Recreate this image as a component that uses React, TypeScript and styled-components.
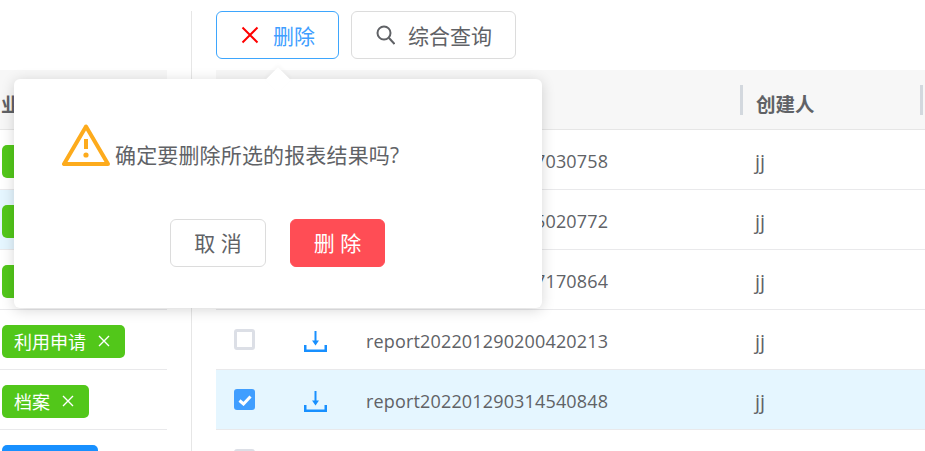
import React from "react";
import styled, { createGlobalStyle } from "styled-components";

const Global = createGlobalStyle`
  html, body { margin: 0; padding: 0; background: #fff; overflow: hidden; }
  * { box-sizing: border-box; }
  body { font-family: "Open Sans", "Noto Sans CJK SC", sans-serif; color: #606266; }
`;
const Page = styled.div`
  position: relative; width: 925px; height: 451px; overflow: hidden; display: flex; padding-top: 11px;
`;
const Side = styled.aside`
  width: 192px; flex: none; border-right: 1px solid #e6e6e6; padding-top: 59px; height: 500px;
`;
const SideTable = styled.div`width: 167px;`;
const SideHead = styled.div`
  height: 60px; background: #f7f7f7; border-bottom: 1px solid #e6e6e6; font-size: 19px; font-weight: 700; line-height: 70px; color: #606266; overflow: hidden; padding-left: 1px;
`;
const SideRow = styled.div<{ $on?: boolean }>`
  height: 60px; display: flex; align-items: center; padding: 3px 0 0 2px; border-bottom: 1px solid #e9e9eb;
  background: ${p => (p.$on ? "#e5f6ff" : "#fff")};
`;
const Tag = styled.span<{ $c: string; $min?: number }>`
  display: inline-flex; align-items: center; height: 33px; padding: 0 15px 1px 12px; border-radius: 5px; background: ${p => p.$c}; color: #fff; font-size: 18px; gap: 12px;
  min-width: ${p => p.$min ?? 0}px;
`;
const Main = styled.main`flex: 1; padding-left: 24px; min-width: 0;`;
const Toolbar = styled.div`display: flex; gap: 12px; height: 59px;`;
const ToolBtn = styled.button<{ $active?: boolean }>`
  height: 48px; padding: 0 23px 1px 24px; display: inline-flex; align-items: center; gap: ${p => (p.$active ? 14 : 13)}px; border-radius: 6px; background: #fff; font: inherit; font-size: 21px;
  border: 1px solid ${p => (p.$active ? "#3ea6fd" : "#dcdcdc")}; color: ${p => (p.$active ? "#409eff" : "#606266")};
`;
const Grid = styled.div`display: grid; grid-template-columns: 57px 85px 383px 180px 1fr;`;
const HeadCell = styled.div`
  height: 60px; background: #f7f7f7; border-bottom: 1px solid #e6e6e6; display: flex; align-items: center; padding: 8px 0 0 15px; font-size: 19.500px; font-weight: 700; position: relative;
`;
const HeadSep = styled.i`position: absolute; left: -1px; top: 15px; width: 3px; height: 30px; background: #d3d8de;`;
const Cell = styled.div<{ $on?: boolean; $center?: boolean }>`
  height: 60px; display: flex; align-items: center; border-bottom: 1px solid #e9e9eb; font-size: 18px; color: #606266;
  background: ${p => (p.$on ? "#e5f6ff" : "#fff")};
  justify-content: ${p => (p.$center ? "center" : "flex-start")};
`;
const Check = styled.span<{ $on?: boolean }>`
  width: 21px; height: 21px; border-radius: 3px; display: inline-flex; align-items: center; justify-content: center;
  ${p => (p.$on ? "background:#409eff;" : "border:3px solid #dcdfe6;background:#fff;")}
`;
const Name = styled.span`padding: 3px 0 0 8px; letter-spacing: 0.16px;`;
const User = styled.span`padding: 3px 0 0 14px; font-size: 20px;`;
const Pop = styled.div`
  position: absolute; left: 14px; top: 79px; width: 528px; height: 229px; background: #fff; border-radius: 6px; box-shadow: 0 2px 14px rgba(0,0,0,.16); padding: 45px 48px 0;
`;
const Arrow = styled.i`
  position: absolute; left: 255px; top: -8px; width: 18px; height: 18px; background: #fff; transform: rotate(45deg); box-shadow: -2px -2px 4px rgba(0,0,0,.03);
`;
const Msg = styled.div`display: flex; align-items: flex-end; gap: 5px; font-size: 21px; letter-spacing: 0.15px; color: #606266; height: 42px; line-height: 32px; white-space: nowrap;`;
const MsgText = styled.span`position: relative; top: 5px;`;
const Actions = styled.div`display: flex; gap: 24px; margin: 53px 0 0 108px;`;
const PopBtn = styled.button<{ $danger?: boolean }>`
  width: ${p => (p.$danger ? 95 : 96)}px; height: 48px; border-radius: 6px; font: inherit; font-size: 21px; padding: 0 0 2px;
  background: ${p => (p.$danger ? "#ff4d55" : "#fff")}; color: ${p => (p.$danger ? "#fff" : "#606266")};
  border: 1px solid ${p => (p.$danger ? "#ff4d55" : "#dcdcdc")};
`;
const DownloadSvg = styled.svg`margin-top: 4px; fill: #1890ff;`;

const X = ({ s = 12, c = "#fff", w = 1.4 }: { s?: number; c?: string; w?: number }) => (
  <svg width={s} height={s} viewBox="0 0 12 12"><path d="M1 1l10 10M11 1L1 11" stroke={c} strokeWidth={w} fill="none" /></svg>
);
const Search = () => (
  <svg width="19" height="20" viewBox="0 0 19 20" fill="none" stroke="#606266" strokeWidth="2"><circle cx="8" cy="8" r="6.500" /><path d="M12.800 12.800L18.500 19" /></svg>
);
const Download = () => (
  <DownloadSvg width="23" height="21" viewBox="0 0 23 21"><path d="M10.500 0h2v11h-2z" /><path d="M8 9.500h7l-3.500 5z" /><path d="M0 14h2.500v4.500h18V14H23v7H0z" /></DownloadSvg>
);
const Warn = () => (
  <svg width="48" height="42" viewBox="0 0 48 42" fill="none"><path d="M24 2.500L2 40h44z" stroke="#fdab1c" strokeWidth="4" strokeLinejoin="round" /><path d="M24 15v10" stroke="#fdab1c" strokeWidth="4" /><circle cx="24" cy="31" r="2.600" fill="#fdab1c" /></svg>
);
const Tick = () => (
  <svg width="14" height="12" viewBox="0 0 14 12" fill="none"><path d="M1.500 6.500L5.500 10L12.500 2.500" stroke="#fff" strokeWidth="3" /></svg>
);

const rows = [
  { name: "report202201290207030758" },
  { name: "report202201290205020772" },
  { name: "report202201290207170864" },
  { name: "report202201290200420213" },
  { name: "report202201290314540848", on: true },
];

export default function App() {
  return (
    <Page>
      <Global />
      <Side>
        <SideTable>
          <SideHead>业务</SideHead>
          <SideRow><Tag $c="#52c71a">利用申请<X /></Tag></SideRow>
          <SideRow $on><Tag $c="#52c71a">利用申请<X /></Tag></SideRow>
          <SideRow><Tag $c="#52c71a">利用申请<X /></Tag></SideRow>
          <SideRow><Tag $c="#52c71a">利用申请<X /></Tag></SideRow>
          <SideRow><Tag $c="#52c71a">档案<X /></Tag></SideRow>
          <SideRow><Tag $c="#1890ff" $min={96} /></SideRow>
        </SideTable>
      </Side>
      <Main>
        <Toolbar>
          <ToolBtn $active><X s={18} c="#ff0000" w={1.300} />删除</ToolBtn>
          <ToolBtn><Search />综合查询</ToolBtn>
        </Toolbar>
        <Grid>
          <HeadCell /><HeadCell /><HeadCell />
          <HeadCell><HeadSep />创建人</HeadCell>
          <HeadCell><HeadSep /></HeadCell>
          {rows.map(r => (
            <React.Fragment key={r.name}>
              <Cell $on={r.on} $center><Check $on={r.on}>{r.on && <Tick />}</Check></Cell>
              <Cell $on={r.on} $center><Download /></Cell>
              <Cell $on={r.on}><Name>{r.name}</Name></Cell>
              <Cell $on={r.on}><User>jj</User></Cell>
              <Cell $on={r.on} />
            </React.Fragment>
          ))}
          <Cell $center><Check /></Cell>
          <Cell /><Cell /><Cell /><Cell />
        </Grid>
      </Main>
      <Pop>
        <Arrow />
        <Msg><Warn /><MsgText>确定要删除所选的报表结果吗?</MsgText></Msg>
        <Actions>
          <PopBtn>取 消</PopBtn>
          <PopBtn $danger>删 除</PopBtn>
        </Actions>
      </Pop>
    </Page>
  );
}
